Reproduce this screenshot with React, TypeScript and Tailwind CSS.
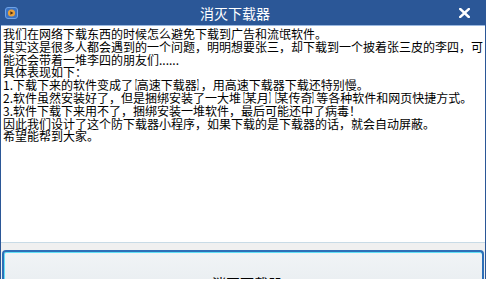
const Lb = () => <span className="inline-block scale-x-[0.32] -mx-[4.1px] font-bold">【</span>;
const Rb = () => <span className="inline-block scale-x-[0.32] -mx-[4.1px] font-bold">】</span>;

const lines: React.ReactNode[] = [
  "我们在网络下载东西的时候怎么避免下载到广告和流氓软件。",
  "其实这是很多人都会遇到的一个问题，明明想要张三，却下载到一个披着张三皮的李四，可",
  "能还会带着一堆李四的朋友们......",
  "具体表现如下：",
  <>1.下载下来的软件变成了<Lb />高速下载器<Rb />，用高速下载器下载还特别慢。</>,
  <>2.软件虽然安装好了，但是捆绑安装了一大堆<Lb />某月<Rb /><Lb />某传奇<Rb />等各种软件和网页快捷方式。</>,
  "3.软件下载下来用不了，捆绑安装一堆软件，最后可能还中了病毒！",
  "因此我们设计了这个防下载器小程序，如果下载的是下载器的话，就会自动屏蔽。",
  "希望能帮到大家。",
];

function AppIcon() {
  return (
    <svg width="13" height="12" viewBox="0 0 13 12">
      <rect x="0.5" y="0.5" width="12" height="11" rx="2.5" fill="#3b73c4" stroke="#6fa3e6" />
      <circle cx="6.5" cy="6" r="3.6" fill="#e8a13a" />
      <path d="M5.4 4.2 L8.4 6 L5.4 7.8 Z" fill="#4a2a10" />
    </svg>
  );
}

export default function App() {
  return (
    <div className="w-[486px] h-[290px] bg-white" style={{ fontFamily: '"Noto Sans CJK SC", "Liberation Sans", sans-serif' }}>
      <div className="h-[279px] flex flex-col overflow-hidden bg-[#f0f0f0] border-x border-[#2b5797]">
        <div className="h-[26px] shrink-0 bg-[#2b5797] flex items-center relative -mx-px px-[5px] border-b border-[#9ab8e0]">
          <AppIcon />
          <div className="absolute left-0 right-0 top-0 h-[25px] flex items-center justify-center pointer-events-none">
            <span className="text-white text-[14px] leading-none mr-[16px]">消灭下载器</span>
          </div>
          <svg className="ml-auto mr-[11px]" width="11" height="10" viewBox="0 0 11 10">
            <path d="M1.2 1 L9.8 9 M9.8 1 L1.2 9" stroke="#ffffff" strokeWidth="2.4" strokeLinecap="square" />
          </svg>
        </div>
        <div className="h-[217px] shrink-0 bg-white border-b border-[#c9dbe6] pl-[2px] pt-[2px]">
          {lines.map((t, i) => (
            <div key={i} className="text-[12px] leading-[12.8px] text-black whitespace-nowrap">
              {t}
            </div>
          ))}
        </div>
        <div className="pt-[7px] px-px">
          <div className="h-[56px] rounded-t-[4px] border-x-2 border-t-2 border-[#2e6fb7] bg-gradient-to-b from-[#f1f4f6] to-[#e4eaee] shadow-[inset_0_1px_0_#62e0f5,inset_1px_0_0_#62e0f5] flex items-center justify-center">
            <span className="text-[14px] leading-none text-black mt-[8px] ml-[8px]">消灭下载器</span>
          </div>
        </div>
      </div>
    </div>
  );
}
